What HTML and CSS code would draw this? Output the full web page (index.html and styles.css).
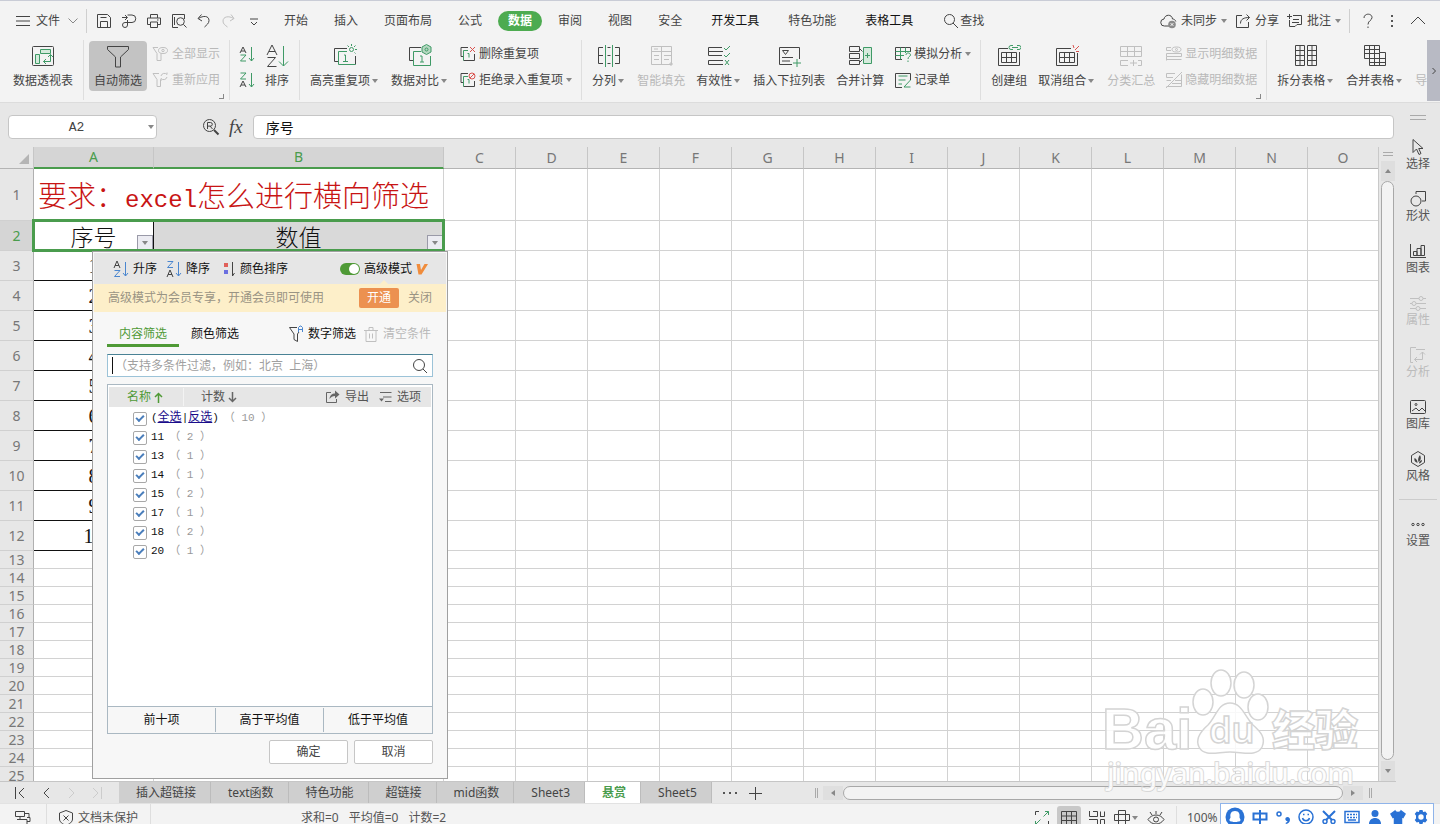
FILE: index.html
```html
<!DOCTYPE html>
<html lang="zh-CN">
<head>
<meta charset="utf-8">
<title>表格</title>
<link rel="stylesheet" href="styles.css">
</head>
<body>
<div class="app">
  <header class="menubar">
    <button class="file"><svg width="14" height="12" viewBox="0 0 14 12"><path d="M0 1.500h14M0 6h14M0 10.500h14"/></svg><span>文件</span><svg class="mute" width="10" height="6" viewBox="0 0 10 6"><path d="M.5.5 5 5 9.500.5"/></svg></button>
    <i class="vline"></i>
    <div class="quick">
      <button aria-label="保存"><svg width="16" height="16" viewBox="0 0 16 16"><path d="M1.500 1.500h10l3 3v10h-13zM4.500 14.500v-6h7v6M4.500 4.500h6"/></svg></button>
      <button aria-label="输出"><svg width="16" height="16" viewBox="0 0 16 16"><path d="M1 4.500h5M4 2l2.500 2.500L4 7M6.500 2H11a3.500 3.500 0 0 1 0 7.500H6.500M6.500 7v5a2.500 2.500 0 1 1-2.500-2.500h2.500"/></svg></button>
      <button aria-label="打印"><svg width="16" height="16" viewBox="0 0 16 16"><path d="M4.500 5V1.500h7V5M4 11.500H1.500V5h13v6.500H12M4.500 9h7v5.500h-7zM11 7h1.500"/></svg></button>
      <button aria-label="打印预览"><svg width="16" height="16" viewBox="0 0 16 16"><path d="M7 14.500H1.500v-13h12V6M3.500 12V4"/><circle cx="9.500" cy="8.500" r="3.800"/><path d="m12.500 11.500 3 3"/></svg></button>
      <button aria-label="撤销"><svg width="16" height="16" viewBox="0 0 16 16"><path d="M5.500 1.500 2 5.500l4 2.500M2.500 5.500C7 2.500 13 2.500 13 7.500c0 3-2.500 4.500-4.500 6.500"/></svg></button>
      <button class="off" aria-label="恢复"><svg width="16" height="16" viewBox="0 0 16 16"><path d="M10 1.500 13 5.500 9 8M12.500 5.500C8 2.500 2 3.500 2 8c0 3 2 4 4.500 6"/></svg></button>
      <button aria-label="更多"><svg width="16" height="16" viewBox="0 0 16 16"><path d="M4 6h8M5 9l3 3 3-3"/></svg></button>
    </div>
    <nav class="tabs">
      <button>开始</button><button>插入</button><button>页面布局</button><button>公式</button><button class="on">数据</button><button>审阅</button><button>视图</button><button>安全</button><button class="wide dark">开发工具</button><button class="wide">特色功能</button><button class="wide dark">表格工具</button>
    </nav>
    <button class="find"><svg width="16" height="16" viewBox="0 0 16 16"><circle cx="6.500" cy="6.500" r="5"/><path d="m10 10 5 5"/></svg>查找</button>
    <div class="account">
      <button><svg width="17" height="16" viewBox="0 0 17 16"><path d="M9 13H4.500a3.500 3.500 0 0 1-.5-7C5 1 12 1 12.500 6c1.500 0 3 1 3.300 2.500"/><circle cx="12" cy="11.500" r="3.800" fill="#8a8a8a" stroke="none"/><path stroke="#fff" d="m10.700 10.200 2.600 2.600m0-2.600-2.600 2.600"/></svg>未同步<b class="arr"></b></button>
      <button><svg width="16" height="16" viewBox="0 0 16 16"><path d="M7 2.500H1.500v12h12V9M5.500 10.500C5.500 6 9 4.500 14.500 4.500M11.500 1.500l3 3-3 3"/></svg>分享</button>
      <button><svg width="16" height="16" viewBox="0 0 16 16"><path d="M6 2.500h8.500v9H10l-2 2H2.500V7M0 3.500h5M2.500 1v5M6 6.500h6M5 9.500h7"/></svg>批注<b class="arr"></b></button>
      <i class="vline"></i>
      <button aria-label="帮助"><svg width="12" height="16" viewBox="0 0 12 16"><path d="M2 5c0-5 8-5 8-.5C10 7.500 6 7.500 6 11.500M6 13.500V15"/></svg></button>
      <button aria-label="菜单"><svg width="4" height="14" viewBox="0 0 4 14"><path d="M1 1h2v2H1zM1 6h2v2H1zM1 11h2v2H1z" fill="#555" stroke="none"/></svg></button>
      <button aria-label="收起"><svg width="16" height="9" viewBox="0 0 16 9"><path d="m1 8 7-7 7 7"/></svg></button>
    </div>
  </header>

  <section class="ribbon">
    <div class="group first">
      <button class="big"><svg width="24" height="24" viewBox="0 0 24 24"><rect x="1.500" y="2.500" width="21" height="19" rx="1"/><g class="g"><path fill="#d5eadc" d="M9.500 5.500h10v4h-10zM4.500 10.500h4v9h-4z"/><path d="M19.500 10.500v7h-7M17 13l2.500-2.500L22 13M15 15l-2.500 2.500L15 20"/></g></svg><span>数据透视表</span></button>
    </div>
    <div class="group filter">
      <button class="big pressed"><svg width="24" height="24" viewBox="0 0 24 24"><path d="M1.500 2.500h21v3l-8 7.500v10h-5V13l-8-7.500z"/></svg><span>自动筛选</span></button>
      <div class="small">
        <button class="off"><svg width="16" height="16" viewBox="0 0 16 16"><path d="M6 1.500H1l4 6v7h4v-7"/><ellipse cx="11" cy="4.500" rx="4.500" ry="3"/><circle cx="11" cy="4.500" r="1.200"/></svg>全部显示</button>
        <button class="off"><svg width="16" height="16" viewBox="0 0 16 16"><path d="M7 1.500H1l4 6v7h3.500v-7M9 4a3.500 3.500 0 0 1 6-1.500V.5M15 5a3.500 3.500 0 0 1-6 1.500V9"/></svg>重新应用</button>
      </div>
      <i class="launch"></i>
    </div>
    <div class="group sort">
      <div class="small">
        <button aria-label="升序"><svg width="16" height="16" viewBox="0 0 16 16"><path d="m1 7 3-6 3 6M2 5h4"/><path class="g" d="M1.500 9H7l-5.500 6H7M12.500 1v14M10 12l2.500 3L15 12"/></svg></button>
        <button aria-label="降序"><svg width="16" height="16" viewBox="0 0 16 16"><path d="m1 15 3-6 3 6M2 13h4"/><path class="g" d="M1.500 1H7L1.500 7H7M12.500 1v14M10 12l2.500 3L15 12"/></svg></button>
      </div>
      <button class="big"><svg width="24" height="24" viewBox="0 0 24 24"><path d="m2 11 5-10 5 10M4 7.500h6M2.500 13.500h8l-8 9h9"/><path class="g" d="M18.500 2v20M14 17.500l4.500 4.500 4.500-4.500"/></svg><span>排序</span></button>
    </div>
    <div class="group">
      <button class="big"><svg width="24" height="24" viewBox="0 0 24 24"><path d="M14 4.500H1.500v13H5M22.500 12v8.500"/><g class="g"><path d="M14 7.500H5.500v13h17M11 11h1.500v6.500M10 17.500h5"/><circle cx="18.500" cy="5.500" r="2"/><path d="M18.500 0v2M22.500 1.500 21 3M24 5.500h-2M14.500 1.500 16 3M21.500 8.500l1 1"/></g></svg><span>高亮重复项<b class="arr"></b></span></button>
      <button class="big"><svg width="24" height="24" viewBox="0 0 24 24"><path d="M13 3.500H1.500v13H5"/><g class="g"><path d="M13 7.500H5.500v14h17V12M12 12h2v6M12 18h4"/><path fill="#b5d8c1" d="m18.500.5 4.500 2.500v5l-4.500 2.500L14 8V3z"/><circle cx="18.500" cy="5.500" r="1.500"/></g></svg><span>数据对比<b class="arr"></b></span></button>
      <div class="small tight">
        <button><svg width="16" height="16" viewBox="0 0 16 16"><path d="M8 1.500H1v9h2.500M3.500 14.500h11V8"/><path class="g" d="M8 4.500H3.500v10M7.500 7.500H9v4"/><path class="r" d="m10 1 5 5m0-5-5 5"/></svg>删除重复项</button>
        <button><svg width="16" height="16" viewBox="0 0 16 16"><path d="M8 1.500H1v9h2.500M3.500 14.500h11V9"/><path class="g" d="M8 4.500H3.500v10M7.500 7.500H9v4"/><g class="r"><circle cx="12" cy="4" r="3"/><path d="m10 6 4-4"/></g></svg>拒绝录入重复项<b class="arr"></b></button>
      </div>
    </div>
    <div class="group">
      <button class="big"><svg width="24" height="24" viewBox="0 0 24 24"><path d="M6 3.500H1.500v16H6M1.500 11.500H6M18 3.500h4.500v16H18M18 11.500h4.500M10.500 3.500h3M10.500 11.500h3M10.500 19.500h3"/><path class="g" d="M8.500 1v22M15.500 1v22"/></svg><span>分列<b class="arr"></b></span></button>
      <button class="big off"><svg width="24" height="24" viewBox="0 0 24 24"><path d="M2.500 2.500h20v18h-20zM12.500 2.500v18M2.500 7.500h20M5 11.500h5M5 15.500h5M15 11.500h7M15 15.500h5M5 5h4M21 19h2v2h-2z"/></svg><span>智能填充</span></button>
      <button class="big"><svg width="24" height="24" viewBox="0 0 24 24"><path d="M15 3.500H1.500v4H16M15 11.500H1.500M16 16.500H1.500v4H16M15 7.500H1.500v4"/><path class="g" d="m17 4 2 2 4-4M17 11l2 2 4-4M18 16l4 5m0-5-4 5"/></svg><span>有效性<b class="arr"></b></span></button>
      <button class="big"><svg width="24" height="24" viewBox="0 0 24 24"><path d="M15 20.500H2.500v-17h20V15M5.500 6.500h6l-3 4zM5 13.500h11M5 17h8"/><path class="g" d="M20 15v8M16 19h8"/></svg><span>插入下拉列表</span></button>
      <button class="big"><svg width="24" height="24" viewBox="0 0 24 24"><path d="M1.500 2.500h10v5h-10zM1.500 9.500h10v5h-10zM1.500 16.500h10v4h-10zM11.500 4.500l3 3M11.500 18.500l3-3"/><path class="g" fill="#d5eadc" d="M15.500 3.500h8v16h-8zM19.500 9v5M17 11.500h5"/></svg><span>合并计算</span></button>
      <div class="small tight">
        <button><svg width="16" height="16" viewBox="0 0 16 16"><path d="M7 13.500H.5v-12h15V6"/><path class="g" d="M.5 5.500h15M5.500 1.500v12M.5 9.500H9M10.500 1.500V7M11 9c0-3 4.500-2.500 4.500 0 0 1.500-2.500 1.500-2.500 4M13 14.500V16"/></svg>模拟分析<b class="arr"></b></button>
        <button><svg width="16" height="16" viewBox="0 0 16 16"><path d="M7 15.500H.5v-14h15V8"/><path class="g" d="M3.500 4h9M3.500 8h7M3.500 12H7M15.500 8 9 15h6.500"/></svg>记录单</button>
      </div>
    </div>
    <div class="group">
      <button class="big"><svg width="24" height="24" viewBox="0 0 24 24"><path d="M11 4.500H1.500v17h21V8M4.500 8.500h15v10h-15zM4.500 13.500h15M9.500 8.500v10M14.500 8.500v10"/><path class="g" d="M16 1.500h-2a2 2 0 0 0 0 4h2M20 1.500h2a2 2 0 0 1 0 4h-2M15 3.500h6"/></svg><span>创建组</span></button>
      <button class="big"><svg width="24" height="24" viewBox="0 0 24 24"><path d="M16 4.500H1.500v17h21V9M4.500 8.500h15v10h-15zM4.500 13.500h15M9.500 8.500v10M14.500 8.500v10"/><path class="r" d="M18 1l1 3M24 2l-4 4M21 7.500h3"/></svg><span>取消组合<b class="arr"></b></span></button>
      <button class="big off"><svg width="24" height="24" viewBox="0 0 24 24"><path d="M1.500 2.500h21v10h-21zM1.500 7.500h21M8.500 2.500v10M15.500 2.500v10M9 16.500H1.500v5H9M19 16.500h3.500v5H19M11 19h7M14.500 16v6"/></svg><span>分类汇总</span></button>
      <div class="small tight">
        <button class="off"><svg width="16" height="16" viewBox="0 0 16 16"><path d="M5 1.500H.5v3H5M.5 7.500h15v3H.5zM.5 13.500h15M.5 10.500v4"/><ellipse cx="10.500" cy="3.500" rx="4.500" ry="2.500"/><circle cx="10.500" cy="3.500" r="1"/></svg>显示明细数据</button>
        <button class="off"><svg width="16" height="16" viewBox="0 0 16 16"><path d="M9 1.500H.5v4H7M.5 8.500H5M9 8.500h6.500M6 11.500h9.500M.5 14.500h15v-12M0 16 16 0"/></svg>隐藏明细数据</button>
      </div>
      <i class="launch"></i>
    </div>
    <div class="group last">
      <button class="big"><svg width="24" height="24" viewBox="0 0 24 24"><path d="M1.500 1.500h9v20h-9zM13.500 1.500h9v20h-9zM6 1.500v20M18 1.500v20M1.500 6.500h9m3 0h9M1.500 11.500h9m3 0h9M1.500 16.500h9m3 0h9"/></svg><span>拆分表格<b class="arr"></b></span></button>
      <button class="big"><svg width="24" height="24" viewBox="0 0 24 24"><path d="M1.500 1.500h15v7h6v13h-16v-7h-5zM6.500 1.500v13M11.500 1.500v20M16.500 8.500v13M1.500 5.500h15M1.500 9.500h15M6.500 14.500h16M6.500 18.500h16"/></svg><span>合并表格<b class="arr"></b></span></button>
      <button class="big off"><span class="lone">导</span></button>
    </div>
    <button class="more" aria-label="向右滚动"><svg width="6" height="8" viewBox="0 0 6 8"><path d="m1.500 1 3 3-3 3"/></svg></button>
  </section>

  <div class="work">
    <main class="left">
      <div class="formula">
        <div class="namebox"><input aria-label="名称框" value="A2"><b class="arr"></b></div>
        <svg width="18" height="18" viewBox="0 0 18 18"><circle cx="7.500" cy="7.500" r="6"/><path d="M5.500 11V4.500h3a1.800 1.800 0 0 1 0 3.600h-3M8 8l2.500 3"/><path d="M12 12l4.500 4.500" stroke-width="2"/></svg>
        <span class="fx">fx</span>
        <input class="formula-input" aria-label="编辑栏" value="序号">
      </div>
      <div class="sheet">
        <div class="cells">
          <table>
            <colgroup><col class="c-row"><col class="c-a"><col class="c-b"><col class="c-n" span="12"><col></colgroup>
            <thead><tr><th class="corner"></th><th class="sel">A</th><th class="sel">B</th><th>C</th><th>D</th><th>E</th><th>F</th><th>G</th><th>H</th><th>I</th><th>J</th><th>K</th><th>L</th><th>M</th><th>N</th><th>O</th></tr></thead>
            <tbody id="rows"></tbody>
          </table>
          <div class="selection"></div>
        </div>
        <div class="vscroll">
          <svg width="10" height="5" viewBox="0 0 10 5"><path d="M0 .5h10M0 3.500h10" stroke="#aaa"/></svg>
          <button class="step" aria-label="向上滚动"><b class="arr up"></b></button>
          <div class="thumb"></div>
          <button class="step" aria-label="向下滚动"><b class="arr"></b></button>
        </div>

        <section class="panel">
          <div class="panel-top">
            <button><svg width="16" height="18" viewBox="0 0 16 18"><path d="m1 8 3-7 3 7M2 5.500h4"/><path class="b" d="M1.500 10.500H7l-5.500 6H7M12.500 2v14M10 13l2.500 3 2.500-3"/></svg>升序</button>
            <button><svg width="16" height="18" viewBox="0 0 16 18"><path d="m1 17 3-7 3 7M2 14.500h4"/><path class="b" d="M1.500 1.500H7l-5.500 6H7M12.500 2v14M10 13l2.500 3 2.500-3"/></svg>降序</button>
            <button><svg width="12" height="16" viewBox="0 0 12 16"><path fill="#e0605a" stroke="none" d="M0 2h4v4H0z"/><path fill="#6a6fe0" stroke="none" d="M0 9h4v4H0z"/><path d="M8.500 1v14l2-3"/></svg>颜色排序</button>
            <label class="adv"><input type="checkbox" class="switch" checked>高级模式<svg width="12" height="12" viewBox="0 0 12 12"><path fill="#f08c3c" stroke="none" d="M.5 1h3.500l1 6 3.500-6H12L5.500 11.500h-3z"/></svg></label>
          </div>
          <div class="banner"><span>高级模式为会员专享，开通会员即可使用</span><button class="open">开通</button><button class="close">关闭</button></div>
          <div class="panel-tabs">
            <button class="on">内容筛选</button><button>颜色筛选</button>
            <button class="num"><svg width="16" height="18" viewBox="0 0 16 18"><path d="M9 2.500H1.500L6 9v5.500l3.500 2V9l1.500-2"/><path class="b" d="M10.500 7V2.500L12 1h1l1.500 1.500V7M10.500 4.500h4"/></svg>数字筛选</button>
            <button class="off"><svg width="14" height="17" viewBox="0 0 14 17"><path d="M0 4.500h14M2 4.500v11h10v-11M5 4V1.500h4V4M5.500 7.500v5M8.500 7.500v5"/></svg>清空条件</button>
          </div>
          <div class="search"><input aria-label="搜索" placeholder="（支持多条件过滤，例如：北京&nbsp; 上海）"><svg width="18" height="18" viewBox="0 0 18 18"><circle cx="8" cy="8" r="5.500"/><path d="m12 12 4 4"/></svg></div>
          <div class="list">
            <div class="list-head">
              <button class="name">名称<svg width="9" height="11" viewBox="0 0 9 11"><path d="M4.500 11V1.500M1 5l3.500-3.500L8 5"/></svg></button>
              <button class="count">计数<svg width="9" height="11" viewBox="0 0 9 11"><path d="M4.500 0v9.500M1 6l3.500 3.500L8 6"/></svg></button>
              <button class="export"><svg width="15" height="14" viewBox="0 0 15 14"><path d="M6 2.500H1.500v10h10V9"/><path fill="#666" stroke="none" d="M4.500 9C5 5 7 3.500 10 3.500V.5l4.500 4-4.500 4V6C7.500 6 6 7 4.500 9z"/></svg>导出</button>
              <button><svg width="13" height="12" viewBox="0 0 13 12"><path d="M1 1.500h11.500M4 6h8.500M6 10.500h6.500"/><path fill="#666" stroke="none" d="M0 7.500h5L2.500 10.500z"/></svg>选项</button>
            </div>
            <div class="items">
              <div class="item"><input type="checkbox" aria-label="全选" checked><span>(<a href="#">全选</a>|<a href="#">反选</a>)</span><small>（ 10 ）</small></div>
              <label class="item"><input type="checkbox" checked><span>11</span><small>（ 2 ）</small></label>
              <label class="item"><input type="checkbox" checked><span>13</span><small>（ 1 ）</small></label>
              <label class="item"><input type="checkbox" checked><span>14</span><small>（ 1 ）</small></label>
              <label class="item"><input type="checkbox" checked><span>15</span><small>（ 2 ）</small></label>
              <label class="item"><input type="checkbox" checked><span>17</span><small>（ 1 ）</small></label>
              <label class="item"><input type="checkbox" checked><span>18</span><small>（ 2 ）</small></label>
              <label class="item"><input type="checkbox" checked><span>20</span><small>（ 1 ）</small></label>
            </div>
            <div class="presets"><button>前十项</button><button>高于平均值</button><button>低于平均值</button></div>
          </div>
          <div class="actions"><button>确定</button><button>取消</button></div>
        </section>
      </div>

      <div class="sheetbar">
        <div class="sheetnav">
          <button aria-label="第一张"><svg width="12" height="12" viewBox="0 0 12 12"><path d="M1.500 0v12M10 1 5 6l5 5"/></svg></button>
          <button aria-label="上一张"><svg width="12" height="12" viewBox="0 0 12 12"><path d="M9 1 4 6l5 5"/></svg></button>
          <button class="faint" aria-label="下一张"><svg width="12" height="12" viewBox="0 0 12 12"><path d="m4 1 5 5-5 5"/></svg></button>
          <button class="faint" aria-label="最后一张"><svg width="12" height="12" viewBox="0 0 12 12"><path d="M10.500 0v12M2 1l5 5-5 5"/></svg></button>
        </div>
        <div class="sheets"><button>插入超链接</button><button>text函数</button><button>特色功能</button><button>超链接</button><button>mid函数</button><button>Sheet3</button><button class="on">悬赏</button><button>Sheet5</button></div>
        <button class="plain" aria-label="更多工作表"><svg width="14" height="4" viewBox="0 0 14 4"><path fill="#555" stroke="none" d="M0 1h2v2H0zM6 1h2v2H6zM12 1h2v2h-2z"/></svg></button>
        <button class="plain" aria-label="新建工作表"><svg width="14" height="14" viewBox="0 0 14 14"><path d="M7.500 1v13M1 7.500h13"/></svg></button>
        <div class="hscroll"><i class="grip"></i><button class="step" aria-label="向左滚动"><b class="arr lt"></b></button><div class="thumb"></div><button class="step" aria-label="向右滚动"><b class="arr rt"></b></button><i class="grip"></i></div>
      </div>

      <svg class="watermark" width="284" height="150" viewBox="-20 0 284 150">
        <text class="w-bai" x="-17" y="99">Bai</text>
        <ellipse cx="102" cy="33" rx="10" ry="13"/><ellipse cx="125" cy="35" rx="10" ry="13"/><ellipse cx="84" cy="52" rx="10" ry="13"/><ellipse cx="139" cy="57" rx="10" ry="13"/>
        <path d="M111 53c-12 0-14 14-22 22-8 7-13 14-9 22 5 10 18 5 31 5s27 5 32-5c4-9-1-15-9-22-8-8-11-22-23-22z"/>
        <text class="w-du" x="90" y="93">du</text>
        <text class="w-cn" x="153" y="96">经验</text>
        <text class="w-url" x="-12" y="134">jingyan.baidu.com</text>
      </svg>
    </main>

    <aside class="side">
      <svg width="16" height="5" viewBox="0 0 16 5"><path d="M0 .5h16M0 4.500h16" stroke="#aaa"/></svg>
      <button><svg width="18" height="18" viewBox="0 0 18 18"><path d="M4 1.500v13l3.500-3.500 2.500 5.500 2-1-2.300-5H14z"/></svg>选择</button>
      <button><svg width="18" height="18" viewBox="0 0 18 18"><circle cx="7" cy="11" r="5"/><path d="M7 4V1.500h9.500V11H13"/></svg>形状</button>
      <button><svg width="18" height="18" viewBox="0 0 18 18"><path d="M1.500 2v13.500H17M4.500 13.500V9.500H8v4zM8 13.500v-7h4v7zM12 13.500v-10h3.500v10z"/></svg>图表</button>
      <button class="off"><svg width="18" height="18" viewBox="0 0 18 18"><path d="M1 4.500h9M14 4.500h3M1 9.500h2M7 9.500h10M1 14.500h6M11 14.500h6"/><circle cx="12" cy="4.500" r="2"/><circle cx="5" cy="9.500" r="2"/><circle cx="9" cy="14.500" r="2"/></svg>属性</button>
      <button class="off"><svg width="18" height="18" viewBox="0 0 18 18"><path d="M7 1.500H1.500v15H4M7 3.500h9M13.500 6v7.500h-8M11 8.500 13.500 6 16 8.500M8 11l-2.500 2.500L8 16"/></svg>分析</button>
      <button><svg width="18" height="18" viewBox="0 0 18 18"><rect x="1.500" y="2.500" width="15" height="13" rx="1"/><circle cx="7" cy="6.500" r="1"/><path d="m3 13 4-3 3 3 3-3 3 3"/></svg>图库</button>
      <button><svg width="18" height="18" viewBox="0 0 18 18"><path d="m9 1.500 6.500 4v7L9 16.500l-6.500-4v-7z"/><path fill="#444" d="M8.500 13C5.500 12 5 10 5.500 8c2 1 3 2.500 3 5zM9.500 12c-1-3 0-5 1.500-7 1.500 3 1 5-1.500 7zM10 13.500c0-2 1-3 3-3.500 0 2-1 3-3 3.500z" stroke="none"/></svg>风格</button>
      <i class="hline"></i>
      <button><svg width="18" height="18" viewBox="0 0 18 18"><circle cx="4" cy="9.500" r="1.200"/><circle cx="9" cy="9.500" r="1.200"/><circle cx="14" cy="9.500" r="1.200"/></svg>设置</button>
    </aside>
  </div>

  <footer class="status">
    <div class="status-row">
      <button class="mode" aria-label="模式"><svg width="18" height="18" viewBox="0 0 18 18"><path d="M1.500 2.500h9v5h-9zM10.500 4.500H15v4M3 10.500h10v5H3M6 7.500v3M13 8.500h3v4h-3M1 15.500h3"/></svg></button>
      <button class="protect"><svg width="16" height="18" viewBox="0 0 16 18"><path d="M8 1.500 14.500 4v6c0 3-3 5-6.500 6.500C4.500 15 1.500 13 1.500 10V4zM5.500 6.500l5 5m0-5-5 5"/></svg>文档未保护</button>
      <div class="sum"><span>求和=0</span><span>平均值=0</span><span>计数=2</span></div>
      <div class="views">
        <button aria-label="全屏"><svg width="16" height="16" viewBox="0 0 16 16"><path d="M1.500 5V1.500H5M11 14.500h3.500V11"/><path class="g" d="M1.500 11v3.500H5M1.500 14.500l5-5M11 1.500h3.500V5M14.500 1.500l-5 5"/></svg></button>
        <button class="on" aria-label="普通视图"><svg width="16" height="16" viewBox="0 0 16 16"><path d="M.5 1.500h15v13H.5zM.5 6h15M.5 10.500h15M5.500 1.500v13M10.500 1.500v13"/></svg></button>
        <button aria-label="分页预览"><svg width="17" height="16" viewBox="0 0 17 16"><path d="M1.500 1v5.500h8v-5H5M1 9.500h8.500v5H1M12 6.500h4.500v-5M12.500 1.500v5M16.500 9.500h-4v5h4z"/></svg></button>
        <button aria-label="页面布局"><svg width="16" height="16" viewBox="0 0 16 16"><path d="M4.500.5h7v15h-7zM.5 4.500h15v6H.5z"/></svg><b class="arr"></b></button>
        <button aria-label="护眼模式"><svg width="18" height="16" viewBox="0 0 18 16"><path d="M1 9.500c4-6 12-6 16 0-4 6-12 6-16 0zM9 1v3M3 2l2 3M15 2l-2 3"/><circle cx="9" cy="9.500" r="2.500"/></svg></button>
      </div>
      <span class="zoom">100%</span>
    </div>
  </footer>

  <div class="ime">
    <svg width="20" height="20" viewBox="0 0 20 20"><circle cx="10" cy="10" r="9.500" fill="#2a72d5" stroke="none"/><path fill="#fff" stroke="none" d="M10 4c-4 0-5 3-4.500 6 .2 1.500-2 2.500-.5 4 1 1 2 0 3 1h4c1-1 2 0 3-1 1.500-1.500-.7-2.500-.5-4C15 7 14 4 10 4z"/></svg>
    <svg width="16" height="16" viewBox="0 0 16 16"><path d="M1.500 4.500h13v6h-13zM8 1v14" stroke-width="2"/></svg>
    <svg width="16" height="16" viewBox="0 0 16 16"><circle cx="4" cy="5" r="2"/><path stroke="none" d="M11 8.500a2.500 2.500 0 0 1 4 2c0 2.500-1.500 4-4 4.500l-.5-1c1.300-.5 2-1.200 2-2-2 0-2.800-2-1.500-3.500z" fill="#2a72d5"/></svg>
    <svg width="16" height="16" viewBox="0 0 16 16"><circle cx="8" cy="8" r="7"/><path d="M4.500 9c1 3.500 6 3.500 7 0M5 5.500h1.500M9.500 5.500H11"/></svg>
    <svg width="16" height="16" viewBox="0 0 16 16"><path d="m2 2 9 9M14 2l-9 9" stroke-width="2"/><circle cx="4" cy="12.500" r="2"/><circle cx="12" cy="12.500" r="2"/></svg>
    <svg width="16" height="16" viewBox="0 0 16 16"><path d="M1 2.500h14v11H1zM4 11h8"/><path d="M3 5.500h10M3 8.500h10" stroke-dasharray="2 1"/></svg>
    <svg width="16" height="16" viewBox="0 0 16 16"><g fill="#2a72d5" stroke="none"><circle cx="8" cy="4.500" r="3.500"/><path d="M2 15c0-8 12-8 12 0z"/></g></svg>
    <svg width="16" height="16" viewBox="0 0 16 16"><path fill="#2a72d5" d="M5 2 1 5l2 3.500 1.500-1V15h7V7.500l1.500 1L15 5l-4-3c-1 2-5 2-6 0z"/></svg>
    <svg width="16" height="16" viewBox="0 0 16 16"><path fill="#2a72d5" stroke="none" fill-rule="evenodd" d="M6.500 1h3l.6 1.900 2.200-.5 2 2.700-1.300 1.500v2.800l1.300 1.500-2 2.700-2.200-.5L9.500 15h-3l-.6-1.900-2.200.5-2-2.700L3 9.400V6.600L1.700 5.100l2-2.700 2.200.5zM8 5.300a2.700 2.700 0 1 0 0 5.400 2.700 2.700 0 0 0 0-5.400z"/></svg>
  </div>
</div>
<script src="sheet.js"></script>
</body>
</html>
```

FILE: sheet.js
```js
const body = document.getElementById("rows");
const filterButton = '<button class="filter-btn" aria-label="筛选"><b class="arr"></b></button>';

for (let n = 1; n <= 25; n++) {
  const row = document.createElement("tr");
  let html = `<th>${n}</th>`;
  let blanks = 13;
  if (n === 1) {
    row.className = "title";
    html += '<td colspan="2">要求：<span>excel</span>怎么进行横向筛选</td>';
  } else if (n === 2) {
    row.className = "fields";
    html += `<td>序号${filterButton}</td><td>数值${filterButton}</td>`;
  } else if (n <= 12) {
    row.className = "data";
    html += `<td>${n - 2}</td><td></td>`;
  } else {
    blanks = 15;
  }
  row.innerHTML = html + "<td></td>".repeat(blanks);
  body.append(row);
}
```

FILE: styles.css
```css
* { box-sizing: border-box; }
body {
  margin: 0;
  overflow: hidden;
  font: 12px/16px "Noto Sans", "Noto Sans CJK SC", sans-serif;
  color: #444;
}
button, input { font: inherit; color: inherit; margin: 0; padding: 0; border: 0; background: none; }
button { display: flex; align-items: center; white-space: nowrap; flex: none; }
svg { flex: none; fill: none; stroke: #444; stroke-width: 1; }
svg .g { stroke: #3f9a66; }
svg .r { stroke: #d9534f; }
svg .b { stroke: #4a86cf; }
.off { color: #b9b9b9; }
.off svg { stroke: #c0c0c0; }
.arr { flex: none; display: inline-block; border: 3px solid transparent; border-top: 4px solid #888; border-bottom: 0; }
.arr.up { border-top: 0; border-bottom: 4px solid #888; }
.arr.lt { border: 3px solid transparent; border-right: 4px solid #888; border-left: 0; }
.arr.rt { border: 3px solid transparent; border-left: 4px solid #888; border-right: 0; }
.vline { width: 1px; height: 24px; background: #cfcfcf; }

.app { position: relative; display: flex; flex-direction: column; height: 100vh; background: #f3f3f3; }

.menubar { flex: none; height: 40px; display: flex; align-items: center; border-top: 1px solid #c9ccd6; padding: 0 14px 0 16px; }
.file { gap: 6px; margin-right: 8px; }
.file .mute { margin-left: 2px; stroke: #888; }
.quick { display: flex; gap: 9px; margin-left: 9px; margin-right: 12px; }
.tabs { display: flex; gap: 6px; }
.tabs button { height: 20px; padding: 0 10px; border-radius: 10px; }
.tabs .wide { margin-left: 3px; }
.tabs .dark { color: #111; }
.tabs .on { background: #4dab50; color: #fff; font-weight: 700; }
.find { margin-left: 20px; gap: 1px; }
.account { margin-left: auto; display: flex; align-items: center; gap: 8px; }
.account button { gap: 4px; }
.account .vline + button { margin-left: 4px; }
.account button:nth-last-child(2) { margin: 0 8px; }

.ribbon { position: relative; flex: none; display: flex; height: 63px; overflow: hidden; border-bottom: 1px solid #dcdcdc; }
.group { position: relative; flex: none; display: flex; align-items: flex-start; gap: 11px; height: 60px; padding: 1px 9px 0 10px; border-right: 1px solid #dedede; }
.group.first { padding: 1px 10px 0 13px; }
.group.filter { gap: 5px; padding: 1px 9px 0 5px; }
.group.sort { gap: 10px; padding: 1px 10px 0 9px; }
.group.last { border: 0; }
.big { flex-direction: column; gap: 5px; height: 50px; padding: 3px 0 2px; }
.big span { display: flex; align-items: center; }
.big .arr { margin: 0 2px; }
.big .lone { margin-top: 29px; }
.pressed { padding: 3px 5px 2px; border-radius: 4px; background: #c3c3c3; }
.small { display: flex; flex-direction: column; gap: 2px; padding-top: 1px; }
.small button { height: 24px; gap: 4px; }
.tight button { gap: 3px; }
.launch { position: absolute; right: 5px; bottom: 1px; width: 5px; height: 5px; border: solid #888; border-width: 0 1px 1px 0; }
.more { position: absolute; right: 0; top: 0; width: 13px; height: 61px; justify-content: center; background: #b8bac4; }

.work { flex: 1; min-height: 0; display: flex; background: #e7e7e7; }
.left { position: relative; flex: 1; min-width: 0; display: flex; flex-direction: column; }
.formula { flex: none; display: flex; align-items: center; height: 44px; padding: 4px 2px 0 8px; }
.namebox { display: flex; align-items: center; width: 149px; height: 24px; margin-right: 45px; padding-right: 2px; background: #fff; border: 1px solid #c6c6c6; border-radius: 4px; }
.namebox input { flex: 1; min-width: 0; padding: 2px 4px 0 0; text-align: center; font: 13px/20px "Liberation Mono", monospace; }
.fx { margin: 0 10px 0 9px; font: italic 19px/20px "Liberation Serif", serif; }
.formula-input { flex: 1; min-width: 0; height: 24px; padding: 0 12px; background: #fff; border: 1px solid #c6c6c6; border-radius: 4px; font-size: 14px; color: #111; }

.sheet { position: relative; flex: 1; min-height: 0; display: flex; }
.cells { position: relative; flex: 1; min-width: 0; overflow: hidden; border-right: 1px solid #c9c9c9; }
table { width: 100%; table-layout: fixed; border-collapse: separate; border-spacing: 0; background: #fff; }
.c-row { width: 34px; }
.c-a { width: 120px; }
.c-b { width: 290px; }
.c-n { width: 72px; }
th, td { position: relative; height: 18px; padding: 0; border: solid #d2d2d2; border-width: 0 1px 1px 0; white-space: nowrap; text-align: center; }
th { background: #e7e7e7; font-weight: 400; font-size: 14px; line-height: 17px; color: #777; }
tr > :last-child { border-right: 0; }
thead th { height: 22px; line-height: 20px; border-color: #c6c6c6; border-bottom-color: #b4b4b4; }
tbody th { border-right-color: #b0b0b0; border-bottom-color: #d0d0d0; }
.corner::after { content: ""; position: absolute; right: 4px; bottom: 4px; border: solid transparent; border-width: 0 0 10px 10px; border-bottom-color: #b5b5b5; }
thead .sel { background: #d5d5d5; color: #4a9c4d; border-bottom: 2px solid #4a9c4d; }
.title th, .title td { height: 52px; }
.title td:nth-child(2) { padding-left: 4px; text-align: left; font: 29px/40px "Noto Sans CJK SC", sans-serif; font-weight: 300; color: #c81414; }
.title span { font: 24px/30px "Liberation Mono", monospace; }
.fields th, .fields td, .data th, .data td { height: 30px; }
.fields th { background: #d5d5d5; color: #4a9c4d; }
.fields td:nth-child(2), .fields td:nth-child(3) { font: 23px/28px "Noto Sans CJK SC", sans-serif; font-weight: 300; color: #111; border-right-color: #111; }
.fields td:nth-child(3) { background: #d9d9d9; }
.filter-btn { position: absolute; right: 0; bottom: 0; width: 16px; height: 15px; justify-content: center; background: #ececf2; border: 1px solid #9a9aa8; }
.data td:nth-child(2), .data td:nth-child(3) { border-color: #111; border-right-color: #d2d2d2; }
.data td:nth-child(2) { font: 20px/28px "Liberation Serif", serif; color: #111; }
.selection { position: absolute; left: 32px; top: 72px; width: 413px; height: 33px; border: 3px solid #4a9c4d; }

.vscroll { flex: none; width: 17px; display: flex; flex-direction: column; align-items: center; padding-top: 5px; }
.vscroll .step { width: 14px; height: 20px; margin-top: 4px; justify-content: center; background: #dedede; }
.vscroll .thumb { flex: 1; width: 13px; background: #f3f3f3; border: 1px solid #a8a8a8; border-radius: 7px; }
.vscroll .thumb + .step { margin-top: 1px; }

.panel { position: absolute; left: 92px; top: 104px; width: 356px; height: 528px; display: flex; flex-direction: column; padding: 1px; background: #f7f7f7; border: 1px solid #a0a0a0; color: #111; }
.panel button, .panel label { cursor: default; }
.panel-top { flex: none; display: flex; align-items: center; height: 31px; padding: 0 18px 0 19px; gap: 9px; background: #e6e6e6; }
.panel-top button { gap: 4px; }
.panel-top button:nth-child(3) { margin-left: 5px; }
.adv { display: flex; align-items: center; gap: 4px; margin-left: auto; }
.switch { appearance: none; width: 20px; height: 12px; padding: 1px; border-radius: 6px; background: #4f9a36; }
.switch::after { content: ""; display: block; width: 10px; height: 10px; margin-left: 8px; border-radius: 5px; background: #fff; }
.banner { position: relative; flex: none; display: flex; align-items: center; height: 28px; padding: 0 14px; background: #fdefc9; color: #9a9484; }
.banner::before { content: ""; position: absolute; right: 58px; top: -4px; border: 4px solid transparent; border-top: 0; border-bottom-color: #fdefc9; }
.open { height: 20px; margin-left: auto; padding: 0 8px; border-radius: 2px; background: #ec9150; color: #fff; }
.close { margin-left: 9px; }
.panel-tabs { flex: none; display: flex; height: 35px; padding: 0 15px 0 13px; }
.panel-tabs button { padding: 12px 12px 0; border-bottom: 3px solid transparent; }
.panel-tabs .on { color: #4f9a36; border-bottom-color: #4f9a36; }
.panel-tabs .num { margin-left: auto; padding: 12px 8px 0 0; gap: 4px; }
.panel-tabs .off { padding: 12px 0 0; gap: 5px; }
.search { flex: none; display: flex; align-items: center; height: 23px; margin: 7px 13px 7px; padding: 0 3px 0 4px; background: #fff; border: 1px solid #9cc3d8; border-top-color: #4a8295; }
.search input { flex: 1; min-width: 0; height: 17px; padding-left: 2px; border-left: 1px solid #111; outline: 0; }
.search input::placeholder { color: #a0a0a0; opacity: 1; }
.list { flex: 1; min-height: 0; display: flex; flex-direction: column; margin: 0 13px; border: 1px solid #aab8c2; background: #fff; }
.list-head { flex: none; display: flex; align-items: center; height: 20px; margin: 2px 1px 0; padding-right: 10px; background: #e6e6e6; color: #555; }
.list-head button { gap: 3px; }
.list-head svg { stroke: #666; stroke-width: 1.500; }
.list-head .name { width: 75px; height: 18px; padding-left: 18px; border-right: 1px solid #f3f3f3; color: #4f9a36; }
.list-head .name svg { stroke: #4f9a36; }
.list-head .count { padding-left: 17px; }
.list-head .export { margin: 0 10px 0 auto; }
.list-head .export ~ button, .list-head .export { gap: 5px; }
.list-head .export svg, .list-head .export ~ button svg { stroke-width: 1; }
.items { flex: 1; padding: 1px 0 0 25px; font: 11px/16px "Liberation Mono", "Noto Sans CJK SC", monospace; }
.item { display: flex; align-items: center; height: 19px; color: #111; }
.item input { appearance: none; width: 14px; height: 14px; margin: 2px 4px 0 0; border: 1px solid #a8a8a8; border-radius: 2px; background: #fff; }
.item input::after { content: ""; display: block; width: 6px; height: 3px; margin: 2px 0 0 2px; border: solid #4a7ebb; border-width: 0 0 2px 2px; transform: rotate(-45deg); }
.item a { font-size: 12px; color: #1a0d8b; }
.item small { font-size: 11px; color: #999; margin-left: 5px; }
.presets { flex: none; display: grid; grid-template-columns: 1fr 1fr 1fr; height: 27px; padding: 1px 0; background: #f7f7f7; border-top: 1px solid #aab8c2; }
.presets button { justify-content: center; border-right: 1px solid #aab8c2; }
.presets button:last-child { border: 0; }
.actions { flex: none; display: flex; justify-content: flex-end; gap: 6px; padding: 6px 13px 13px; }
.actions button { width: 79px; height: 24px; justify-content: center; background: #fff; border: 1px solid #c6c6c6; border-radius: 2px; color: #444; }

.sheetbar { flex: none; display: flex; align-items: center; height: 22px; border-top: 1px solid #c6c6c6; }
.sheetnav { display: flex; justify-content: space-between; width: 119px; padding: 0 16px 0 14px; }
.sheetnav .faint svg { stroke: #ccc; }
.sheets { display: flex; height: 21px; }
.sheets button { padding: 0 14px 0 17px; background: #cfcfcf; border-right: 1px solid #bcbcbc; }
.sheets .on { background: #fff; color: #4a9c4d; font-weight: 700; }
.plain { margin-left: 11px; }
.hscroll { flex: 1; display: flex; align-items: center; margin: 0 24px 0 53px; }
.hscroll .step { width: 20px; height: 14px; justify-content: center; background: #dfdfdf; }
.hscroll .thumb { flex: 1; height: 14px; background: #f3f3f3; border: 1px solid #a8a8a8; border-radius: 7px; }
.grip { width: 3px; height: 10px; border: solid #aaa; border-width: 0 1px; margin-right: 5px; }
.hscroll .grip:last-child { margin: 0 0 0 6px; }

.watermark { position: absolute; right: 13px; bottom: 3px; pointer-events: none; fill: #fff; fill-opacity: 0.850; stroke: #d4d4d4; stroke-width: 1.500; font-family: "Noto Sans", "Noto Sans CJK SC", sans-serif; }
.w-bai { font-family: "Liberation Sans", sans-serif; font-size: 58px; font-weight: 700; }
.w-du { font-size: 36px; font-weight: 600; }
.w-cn { font-size: 43px; font-weight: 900; }
.w-url { font-size: 28px; font-weight: 500; paint-order: stroke; }

.side { flex: none; width: 44px; display: flex; flex-direction: column; align-items: center; padding-top: 12px; gap: 18px; color: #555; }
.side button { flex-direction: column; }
.side .off { color: #bbb; }
.hline { width: 38px; height: 1px; margin: -3px 0; background: #ccc; }

.status { flex: none; height: 21px; overflow: hidden; border-top: 1px solid #e2e2e2; background: #f3f3f3; color: #555; }
.status-row { display: flex; align-items: center; height: 28px; }
.mode { width: 47px; height: 28px; padding-left: 14px; border-right: 1px solid #dedede; }
.protect { width: 104px; height: 28px; padding-left: 11px; gap: 4px; border-right: 1px solid #dedede; }
.sum { display: flex; gap: 10px; margin-left: 150px; }
.views { display: flex; align-items: center; gap: 5px; margin-left: auto; padding-right: 9px; border-right: 1px solid #dedede; }
.views button { height: 24px; padding: 0 2px; gap: 2px; }
.views .on { padding: 0 4px; border-radius: 3px; background: #c8c8c8; }
.zoom { width: 263px; padding-left: 10px; }
.ime { position: absolute; right: 6px; bottom: 0; display: flex; align-items: center; gap: 7px; width: 214px; height: 21px; padding: 5px 4px 0; overflow: hidden; background: #fff; border: 1px solid #8fb4ea; border-bottom: 0; }
.ime svg { stroke: #2a72d5; stroke-width: 1.500; }
```
